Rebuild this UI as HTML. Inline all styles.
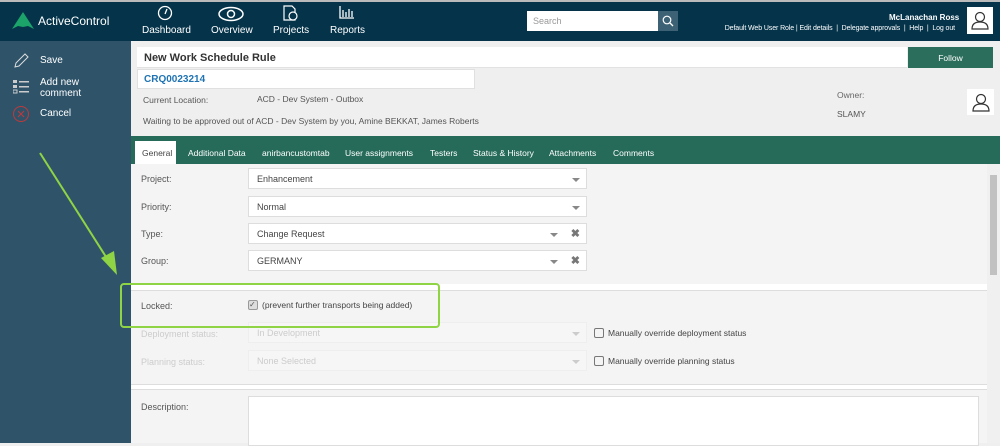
<!DOCTYPE html>
<html><head><style>
*{box-sizing:border-box;margin:0;padding:0}
body{width:1000px;height:443px;overflow:hidden;font-family:"Liberation Sans",sans-serif;background:#efefef;position:relative;font-size:9px;color:#444}
.a{position:absolute}
.hdr{left:0;top:0;width:1000px;height:41px;background:#04334a;border-top:2px solid #bbb}
.nav{color:#fff;font-size:10px;text-align:center}
.side{left:0;top:41px;width:131px;height:402px;background:#2f546a;color:#fff;font-size:10px}
.field{background:#fff;border:1px solid #ddd;height:21px;left:248px;width:339px;padding:5px 8px;font-size:9px;color:#444}
.lbl{left:141px;font-size:9px;color:#555}
.caret{position:absolute;right:6px;top:9px;border-left:4px solid transparent;border-right:4px solid transparent;border-top:4px solid #888}
.x{position:absolute;right:6px;top:3px;font-weight:bold;color:#777;font-size:11px}
.tab{color:#fff;font-size:8.5px;top:148px;white-space:nowrap}
</style></head><body>
<div class="a hdr"></div>
<svg class="a" style="left:12px;top:12px" width="22" height="18"><polygon points="11,0 22,17 16,14 11,15 6,14 0,17" fill="#1ba36a"/></svg>
<div class="a" style="left:38px;top:14px;color:#fff;font-size:12px">ActiveControl</div>
<svg class="a" style="left:157px;top:5px" width="16" height="16"><circle cx="8" cy="8" r="6.5" fill="none" stroke="#fff" stroke-width="1.3"/><line x1="8" y1="9" x2="10" y2="4" stroke="#fff" stroke-width="1.3"/></svg>
<div class="a nav" style="left:142px;top:25px">Dashboard</div>
<svg class="a" style="left:217px;top:6px" width="28" height="16"><ellipse cx="14" cy="8" rx="12" ry="6.5" fill="none" stroke="#fff" stroke-width="1.5"/><circle cx="14" cy="8" r="3.5" fill="none" stroke="#fff" stroke-width="1.5"/></svg>
<div class="a nav" style="left:211px;top:25px">Overview</div>
<svg class="a" style="left:282px;top:4px" width="16" height="18"><path d="M2 2h8l3 3v11H2z" fill="none" stroke="#fff" stroke-width="1.2"/><circle cx="11" cy="12" r="4" fill="#04334a" stroke="#fff" stroke-width="1.2"/></svg>
<div class="a nav" style="left:273px;top:25px">Projects</div>
<svg class="a" style="left:339px;top:6px" width="16" height="13"><path d="M1 0v12h14M4 4v7M7 6v5M10 3v8M13 5v6" stroke="#fff" stroke-width="1.3" fill="none"/></svg>
<div class="a nav" style="left:330px;top:25px">Reports</div>
<div class="a" style="left:527px;top:11px;width:131px;height:20px;background:#fff;color:#999;font-size:9px;padding:5px 6px">Search</div>
<div class="a" style="left:658px;top:11px;width:20px;height:20px;background:#3e6275"></div>
<svg class="a" style="left:662px;top:15px" width="12" height="12"><circle cx="5" cy="5" r="3.8" stroke="#fff" fill="none" stroke-width="1.2"/><line x1="8" y1="8" x2="11" y2="11" stroke="#fff" stroke-width="1.3"/></svg>
<div class="a" style="left:889px;top:13px;color:#fff;font-size:8px;font-weight:bold">McLanachan Ross</div>
<div class="a" style="right:45px;top:25px;color:#fff;font-size:7px;white-space:nowrap;letter-spacing:-0.1px">Default Web User Role | Edit details &nbsp;| &nbsp;Delegate approvals &nbsp;| &nbsp;Help &nbsp;| &nbsp;Log out</div>
<div class="a" style="left:967px;top:7px;width:26px;height:27px;background:#fff"></div>
<svg class="a" style="left:970px;top:10px" width="20" height="20"><circle cx="10" cy="7" r="4.5" fill="none" stroke="#333" stroke-width="1.2"/><path d="M2 19c0-5 3-7 8-7s8 2 8 7z" fill="none" stroke="#333" stroke-width="1.2"/></svg>

<div class="a side"></div>
<svg class="a" style="left:13px;top:53px" width="16" height="16"><path d="M2 14l1-4 9-9 3 3-9 9z" fill="none" stroke="#ddd" stroke-width="1"/></svg>
<div class="a" style="left:40px;top:55px;color:#fff;font-size:10px">Save</div>
<svg class="a" style="left:13px;top:79px" width="16" height="16"><g fill="#ccc"><rect x="0" y="1" width="4" height="3"/><rect x="6" y="2" width="10" height="1.5"/><rect x="0" y="6" width="4" height="3"/><rect x="6" y="7" width="10" height="1.5"/><rect x="0" y="11" width="4" height="3" fill="none" stroke="#ccc"/><rect x="6" y="12" width="10" height="1.5"/></g></svg>
<div class="a" style="left:40px;top:77px;color:#fff;font-size:10px;line-height:11px">Add new<br>comment</div>
<svg class="a" style="left:12px;top:105px" width="18" height="18"><circle cx="9" cy="9" r="7.5" fill="none" stroke="#c0393b" stroke-width="1"/><path d="M6 6l6 6M12 6l-6 6" stroke="#c0393b" stroke-width="1"/></svg>
<div class="a" style="left:40px;top:108px;color:#fff;font-size:10px">Cancel</div>

<div class="a" style="left:137px;top:47px;width:770px;height:21px;background:#fff;border-bottom:1px solid #e2e2e2;padding:5px 7px;font-size:11px;font-weight:bold;color:#333">New Work Schedule Rule</div>
<div class="a" style="left:908px;top:47px;width:85px;height:21px;background:#2b6e5b;color:#fff;font-size:8.5px;text-align:center;padding-top:6px">Follow</div>
<div class="a" style="left:137px;top:69px;width:338px;height:20px;background:#fff;border:1px solid #e0e0e0;padding:4px 6px;font-size:10px;font-weight:bold;color:#1f73b3">CRQ0023214</div>
<div class="a" style="left:143px;top:95px;font-size:8.5px;color:#555">Current Location:</div>
<div class="a" style="left:257px;top:94px;font-size:8.5px;color:#555">ACD - Dev System - Outbox</div>
<div class="a" style="left:143px;top:116px;font-size:8.5px;color:#555">Waiting to be approved out of ACD - Dev System by you, Amine BEKKAT, James Roberts</div>
<div class="a" style="left:837px;top:90px;font-size:8.5px;color:#666">Owner:</div>
<div class="a" style="left:837px;top:109px;font-size:8.5px;color:#555">SLAMY</div>
<div class="a" style="left:967px;top:89px;width:27px;height:26px;background:#fff"></div>
<svg class="a" style="left:971px;top:92px" width="20" height="20"><circle cx="10" cy="7" r="4.5" fill="none" stroke="#333" stroke-width="1.2"/><path d="M2 19c0-5 3-7 8-7s8 2 8 7z" fill="none" stroke="#333" stroke-width="1.2"/></svg>

<div class="a" style="left:131px;top:136px;width:869px;height:28px;background:#266b59"></div>
<div class="a" style="left:135px;top:141px;width:41px;height:23px;background:#fff"></div>
<div class="a tab" style="left:142px;color:#444">General</div>
<div class="a tab" style="left:188px">Additional Data</div>
<div class="a tab" style="left:262px">anirbancustomtab</div>
<div class="a tab" style="left:345px">User assignments</div>
<div class="a tab" style="left:430px">Testers</div>
<div class="a tab" style="left:473px">Status &amp; History</div>
<div class="a tab" style="left:549px">Attachments</div>
<div class="a tab" style="left:613px">Comments</div>

<div class="a" style="left:131px;top:164px;width:856px;height:279px;background:#f4f4f4"></div>
<div class="a" style="left:987px;top:164px;width:13px;height:279px;background:#f0f0f0"></div>
<div class="a" style="left:990px;top:175px;width:7px;height:100px;background:#c1c1c1"></div>
<div class="a lbl" style="top:174px">Project:</div>
<div class="a field" style="top:168px">Enhancement<span class="caret"></span></div>
<div class="a lbl" style="top:202px">Priority:</div>
<div class="a field" style="top:196px">Normal<span class="caret"></span></div>
<div class="a lbl" style="top:229px">Type:</div>
<div class="a field" style="top:223px">Change Request<span class="caret" style="right:28px"></span><span class="x">✖</span></div>
<div class="a lbl" style="top:256px">Group:</div>
<div class="a field" style="top:250px">GERMANY<span class="caret" style="right:28px"></span><span class="x">✖</span></div>
<div class="a" style="left:131px;top:284px;width:856px;height:7px;background:#fff;border-bottom:1px solid #ddd"></div>
<div class="a lbl" style="top:301px">Locked:</div>
<div class="a" style="left:248px;top:300px;width:10px;height:10px;border:1px solid #999;border-radius:2px;background:#ddd;font-size:8px;line-height:8px;color:#555">✓</div>
<div class="a" style="left:262px;top:300px;font-size:8.5px;color:#444">(prevent further transports being added)</div>
<div class="a lbl" style="top:329px;color:#ccc">Deployment status:</div>
<div class="a field" style="top:322px;color:#ccc;border-color:#eee;background:#f6f6f6">In Development<span class="caret" style="border-top-color:#ccc"></span></div>
<div class="a lbl" style="top:357px;color:#ccc">Planning status:</div>
<div class="a field" style="top:350px;color:#ccc;border-color:#eee;background:#f6f6f6">None Selected<span class="caret" style="border-top-color:#ccc"></span></div>
<div class="a" style="left:594px;top:328px;width:10px;height:10px;border:1px solid #777;border-radius:2px"></div>
<div class="a" style="left:608px;top:328px;font-size:8.5px;color:#444">Manually override deployment status</div>
<div class="a" style="left:594px;top:356px;width:10px;height:10px;border:1px solid #777;border-radius:2px"></div>
<div class="a" style="left:608px;top:356px;font-size:8.5px;color:#444">Manually override planning status</div>
<div class="a" style="left:131px;top:384px;width:856px;height:6px;background:#fff;border-bottom:1px solid #ddd;border-top:1px solid #ddd"></div>
<div class="a lbl" style="top:402px">Description:</div>
<div class="a" style="left:248px;top:396px;width:731px;height:50px;background:#fff;border:1px solid #ddd"></div>

<div class="a" style="left:120px;top:283px;width:320px;height:45px;border:2px solid #8fd444;border-radius:4px"></div>
<svg class="a" style="left:0;top:140px" width="130" height="150"><line x1="40" y1="13" x2="108" y2="120" stroke="#8fd444" stroke-width="2"/><polygon points="101,118 117,135 114,111" fill="#8fd444"/></svg>
</body></html>
